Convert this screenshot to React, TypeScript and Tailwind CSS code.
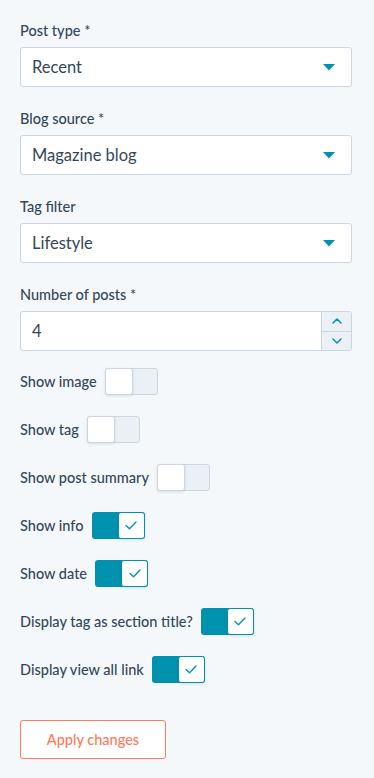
import React from "react";

const Caret = () => (
  <svg width="12" height="7" viewBox="0 0 12 7" className="shrink-0">
    <path d="M0 0h12L6 6.5z" fill="#0091ae" />
  </svg>
);

const Check = () => (
  <svg width="12" height="9" viewBox="0 0 12 9" fill="none">
    <path d="M1 4.5l3.5 3.2L11 1" stroke="#0091ae" strokeWidth="1.3" strokeLinecap="round" strokeLinejoin="round" />
  </svg>
);

const Chevron = ({ up }: { up?: boolean }) => (
  <svg width="10" height="6" viewBox="0 0 10 6" fill="none">
    <path
      d={up ? "M1 5l4-4 4 4" : "M1 1l4 4 4-4"}
      stroke="#0091ae"
      strokeWidth="1.5"
      strokeLinecap="round"
      strokeLinejoin="round"
    />
  </svg>
);

const Field = ({ label, children, first }: { label: string; children: React.ReactNode; first?: boolean }) => (
  <div className={first ? "" : "mt-[22px]"}>
    <div className="text-[14.5px] leading-[20px] font-medium text-[#33475b] mb-[6px]">{label}</div>
    {children}
  </div>
);

const Select = ({ value }: { value: string }) => (
  <div className="flex items-center justify-between h-[40px] w-[332px] bg-white border border-[#cbd6e2] rounded-[3px] pl-[11px] pr-[16px]">
    <span className="text-[16.5px] text-[#33475b]">{value}</span>
    <Caret />
  </div>
);

const Toggle = ({ label, on }: { label: string; on?: boolean }) => (
  <div className="flex items-center gap-[8px] h-[27px] mb-[21px]">
    <span className="text-[14.5px] font-medium text-[#33475b]">{label}</span>
    {on ? (
      <div className="flex w-[53px] h-[27px] rounded-[3px] bg-[#0091ae]">
        <div className="ml-auto w-[27px] h-[27px] bg-white border border-[#0091ae] rounded-[3px] flex items-center justify-center shadow-[0_1px_3px_rgba(45,62,80,0.15)]">
          <Check />
        </div>
      </div>
    ) : (
      <div className="flex w-[53px] h-[27px] rounded-[3px] bg-[#eaf0f6] border border-[#cbd6e2]">
        <div className="-m-px w-[28px] h-[27px] bg-white border border-[#cbd6e2] rounded-[3px] shadow-[0_1px_3px_rgba(45,62,80,0.15)]" />
      </div>
    )}
  </div>
);

export default function App() {
  return (
    <div className="min-h-[778px] w-[374px] bg-[#f5f8fa] pl-[20px] pt-[21px] font-['Lato','Liberation_Sans',sans-serif]">
      <Field label="Post type *" first>
        <Select value="Recent" />
      </Field>
      <Field label="Blog source *">
        <Select value="Magazine blog" />
      </Field>
      <Field label="Tag filter">
        <Select value="Lifestyle" />
      </Field>
      <Field label="Number of posts *">
        <div className="flex h-[40px] w-[332px] bg-white border border-[#cbd6e2] rounded-[3px] overflow-hidden">
          <div className="flex-1 flex items-center pl-[11px] text-[16.5px] text-[#33475b]">4</div>
          <div className="w-[30px] flex flex-col border-l border-[#cbd6e2] bg-[#eaf0f6]">
            <div className="flex-1 flex items-center justify-center border-b border-[#cbd6e2]">
              <Chevron up />
            </div>
            <div className="flex-1 flex items-center justify-center">
              <Chevron />
            </div>
          </div>
        </div>
      </Field>

      <div className="mt-[17px]">
        <Toggle label="Show image" />
        <Toggle label="Show tag" />
        <Toggle label="Show post summary" />
        <Toggle label="Show info" on />
        <Toggle label="Show date" on />
        <Toggle label="Display tag as section title?" on />
        <Toggle label="Display view all link" on />
      </div>

      <button className="mt-[16px] w-[146px] h-[39px] border border-[#ff7a59] rounded-[3px] bg-white text-[14.5px] font-medium text-[#ff7a59]">
        Apply changes
      </button>
    </div>
  );
}
